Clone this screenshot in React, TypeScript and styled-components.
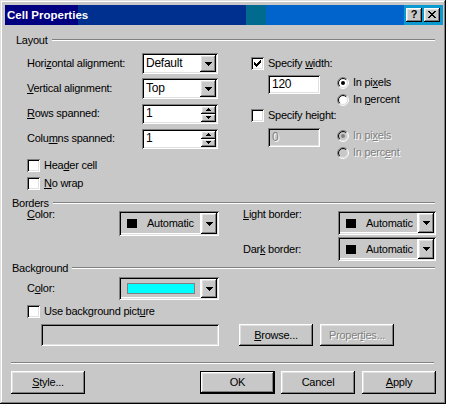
import React from 'react';
import styled, { createGlobalStyle, css } from 'styled-components';

const FACE = '#c8c8c8';

const GlobalStyle = createGlobalStyle`
  html, body { margin: 0; padding: 0; background: #ffffff; }
  body {
    font-family: "Liberation Sans", Arial, sans-serif;
    font-size: 11px;
    line-height: 13px;
    letter-spacing: -0.25px;
    color: #000;
  }
  u { text-decoration: underline; text-underline-offset: 1px; }
`;

const raised = css`
  box-shadow: inset -1px -1px #000, inset 1px 1px #fff, inset -2px -2px #808080, inset 2px 2px #e0e0e0;
`;
const sunken = css`
  box-shadow: inset 1px 1px #808080, inset -1px -1px #fff, inset 2px 2px #000, inset -2px -2px #e0e0e0;
`;

const Window = styled.div`
  width: 446px;
  height: 404px;
  box-sizing: border-box;
  background: ${FACE};
  box-shadow: inset -1px -1px #000, inset 1px 1px #e0e0e0, inset -2px -2px #808080, inset 2px 2px #fff;
  padding: 5px 3px 3px 5px;
  display: flex;
  flex-direction: column;
`;

const TitleBar = styled.div`
  height: 20px;
  flex-shrink: 0;
  display: flex;
  align-items: center;
  padding: 0 3px 0 2px;
  background: linear-gradient(90deg, #000080 0 16.7%, #00308f 16.7% 55%, #006a8f 55% 59.6%, #0064cc 59.6% 91%, #0a9ad0 91% 100%);
`;

const TitleText = styled.span`
  color: #fff;
  font-weight: bold;
  font-size: 11.5px;
  letter-spacing: 0;
`;

const TitleButtons = styled.div`
  margin-left: auto;
  display: flex;
  gap: 2px;
`;

const TitleButton = styled.div`
  width: 16px;
  height: 14px;
  box-sizing: border-box;
  background: ${FACE};
  ${raised};
  display: flex;
  align-items: center;
  justify-content: center;
  font-weight: bold;
  font-size: 11px;
  line-height: 11px;
  padding-bottom: 1px;
`;

const GroupHeading = styled.div<{ $indent: number; $top: number }>`
  display: flex;
  align-items: center;
  height: 12px;
  margin-top: ${p => p.$top}px;
  padding-left: ${p => p.$indent}px;
  padding-right: 8px;
  gap: 4px;
`;

const Etch = styled.div`
  flex: 1;
  height: 0;
  border-top: 1px solid #808080;
  border-bottom: 1px solid #fff;
`;

const Label = styled.span<{ $disabled?: boolean }>`
  white-space: nowrap;
  ${p => p.$disabled && css`
    color: #808080;
    text-shadow: 1px 1px 0 #fff;
  `}
`;

const LayoutBody = styled.div`
  display: flex;
  align-items: flex-start;
  padding-left: 22px;
  gap: 33px;
`;

const LeftCol = styled.div`
  display: flex;
  flex-direction: column;
  padding-top: 7px;
`;

const FieldGrid = styled.div`
  display: grid;
  grid-template-columns: 115px 76px;
  grid-auto-rows: 21px;
  row-gap: 4px;
  align-items: center;
`;

const CheckList = styled.div`
  display: flex;
  flex-direction: column;
  gap: 5px;
  margin-top: 10px;
`;

const CheckRow = styled.div<{ $top?: number; $indent?: number }>`
  display: flex;
  align-items: center;
  gap: 4px;
  height: 13px;
  margin-top: ${p => p.$top ?? 0}px;
  padding-left: ${p => p.$indent ?? 0}px;
`;

const RightCol = styled.div`
  display: flex;
  flex-direction: column;
  padding-top: 11px;
`;

const SizeRow = styled.div<{ $top: number }>`
  display: flex;
  align-items: flex-start;
  margin-left: 17px;
  margin-top: ${p => p.$top}px;
`;

const RadioList = styled.div`
  display: flex;
  flex-direction: column;
  margin-left: 17px;
  margin-top: -1px;
`;

const RadioRow = styled.div`
  display: flex;
  align-items: center;
  gap: 4px;
  height: 17px;
`;

const Field = styled.div<{ $w: number; $h: number; $disabled?: boolean }>`
  width: ${p => p.$w}px;
  height: ${p => p.$h}px;
  box-sizing: border-box;
  background: ${p => (p.$disabled ? FACE : '#fff')};
  ${sunken};
  padding: 2px;
  display: flex;
  align-items: stretch;
  flex-shrink: 0;
`;

const FieldText = styled.div<{ $disabled?: boolean }>`
  flex: 1;
  display: flex;
  align-items: center;
  padding-left: 2px;
  font-size: 12px;
  ${p => p.$disabled && css`
    color: #808080;
    text-shadow: 1px 1px 0 #fff;
  `}
`;

const ArrowButton = styled.div`
  width: 16px;
  flex-shrink: 0;
  box-sizing: border-box;
  background: ${FACE};
  ${raised};
  display: flex;
  align-items: center;
  justify-content: center;
`;

const SpinColumn = styled.div`
  width: 15px;
  display: flex;
  flex-direction: column;
`;

const SpinButton = styled.div`
  flex: 1;
  box-sizing: border-box;
  background: ${FACE};
  ${raised};
  display: flex;
  align-items: center;
  justify-content: center;
`;

const CheckBoxBox = styled.span`
  width: 13px;
  height: 13px;
  box-sizing: border-box;
  background: #fff;
  ${sunken};
  display: inline-flex;
  align-items: center;
  justify-content: center;
  flex-shrink: 0;
`;

const BordersBody = styled.div`
  display: flex;
  align-items: flex-start;
  padding-left: 22px;
  margin-top: 2px;
`;

const PairRow = styled.div`
  display: flex;
  align-items: flex-start;
`;

const FixedLabel = styled.div<{ $w: number; $shift?: number; $center?: boolean }>`
  width: ${p => p.$w}px;
  flex-shrink: 0;
  white-space: nowrap;
  margin-top: ${p => p.$shift ?? 0}px;
  align-self: ${p => (p.$center ? 'center' : 'flex-start')};
`;

const RightGrid = styled.div`
  display: grid;
  grid-template-columns: 95px 98px;
  grid-auto-rows: 24px;
  row-gap: 2px;
  margin-left: 24px;
`;

const ColorDrop = styled.div<{ $w: number; $h: number }>`
  width: ${p => p.$w}px;
  height: ${p => p.$h}px;
  box-sizing: border-box;
  background: ${FACE};
  ${sunken};
  padding: 2px;
  display: flex;
  align-items: stretch;
`;

const ColorMain = styled.div`
  flex: 1;
  display: flex;
  align-items: center;
  padding-left: 6px;
  gap: 10px;
  box-shadow: inset -1px -1px #fff;
`;

const Swatch = styled.span<{ $color: string; $w: number; $h: number; $frame?: boolean }>`
  width: ${p => p.$w}px;
  height: ${p => p.$h}px;
  box-sizing: border-box;
  background: ${p => p.$color};
  border: ${p => (p.$frame ? '1px solid #808080' : 'none')};
  flex-shrink: 0;
`;

const BgColorRow = styled.div`
  display: flex;
  align-items: center;
  padding-left: 22px;
  margin-top: 3px;
`;

const PictureRow = styled.div`
  display: flex;
  align-items: flex-start;
  padding-left: 36px;
  margin-top: 6px;
`;

const PlainField = styled.div<{ $w: number; $h: number }>`
  width: ${p => p.$w}px;
  height: ${p => p.$h}px;
  box-sizing: border-box;
  background: ${FACE};
  ${sunken};
`;

const Button = styled.div<{ $w: number; $h: number; $gap?: number; $default?: boolean; $disabled?: boolean }>`
  width: ${p => p.$w}px;
  height: ${p => p.$h}px;
  margin-left: ${p => p.$gap ?? 0}px;
  box-sizing: border-box;
  background: ${FACE};
  display: flex;
  align-items: center;
  justify-content: center;
  white-space: nowrap;
  flex-shrink: 0;
  ${p => p.$default
    ? css`
        border: 1px solid #000;
        box-shadow: inset -1px -1px #000, inset 1px 1px #fff, inset -2px -2px #808080, inset 2px 2px #e0e0e0;
      `
    : raised}
  ${p => p.$disabled && css`
    color: #808080;
    text-shadow: 1px 1px 0 #fff;
  `}
`;

const Separator = styled.div`
  margin: 16px 9px 0 6px;
  border-top: 1px solid #808080;
  border-bottom: 1px solid #fff;
`;

const ButtonRow = styled.div`
  display: flex;
  align-items: center;
  margin-top: 7px;
  padding-left: 6px;
  padding-right: 7px;
`;

const Spacer = styled.div`
  flex: 1;
`;

/* ---------- drawings ---------- */

const DownArrow = () => (
  <svg width="7" height="4" viewBox="0 0 7 4" shapeRendering="crispEdges">
    <path d="M0 0h7v1h-7z M1 1h5v1h-5z M2 2h3v1h-3z M3 3h1v1h-1z" fill="#000" />
  </svg>
);

const SpinArrow = ({ up }: { up?: boolean }) => (
  <svg width="5" height="3" viewBox="0 0 5 3" shapeRendering="crispEdges">
    {up ? (
      <path d="M2 0h1v1h-1z M1 1h3v1h-3z M0 2h5v1h-5z" fill="#000" />
    ) : (
      <path d="M0 0h5v1h-5z M1 1h3v1h-3z M2 2h1v1h-1z" fill="#000" />
    )}
  </svg>
);

const TickMark = () => (
  <svg width="7" height="7" viewBox="0 0 7 7" shapeRendering="crispEdges">
    <path
      d="M6 0h1v1h-1z M5 1h2v1h-2z M0 2h1v1h-1z M4 2h3v1h-3z M0 3h2v1h-2z M3 3h3v1h-3z M0 4h5v1h-5z M1 5h3v1h-3z M2 6h1v1h-1z"
      fill="#000"
    />
  </svg>
);

const CloseGlyph = () => (
  <svg width="8" height="7" viewBox="0 0 8 7" shapeRendering="crispEdges">
    <path
      d="M0 0h2v1h-2z M6 0h2v1h-2z M1 1h2v1h-2z M5 1h2v1h-2z M2 2h4v1h-4z M3 3h2v1h-2z M2 4h4v1h-4z M1 5h2v1h-2z M5 5h2v1h-2z M0 6h2v1h-2z M6 6h2v1h-2z"
      fill="#000"
    />
  </svg>
);

const Radio = ({ checked, disabled }: { checked?: boolean; disabled?: boolean }) => {
  const arc = (r: number) => {
    const d = r * 0.7071;
    return {
      tl: `M${6 - d} ${6 + d} A${r} ${r} 0 0 1 ${6 + d} ${6 - d}`,
      br: `M${6 + d} ${6 - d} A${r} ${r} 0 0 1 ${6 - d} ${6 + d}`,
    };
  };
  const o = arc(5.5);
  const i = arc(4.5);
  return (
    <svg width="12" height="12" viewBox="0 0 12 12" style={{ flexShrink: 0 }}>
      <circle cx="6" cy="6" r="4.5" fill={disabled ? FACE : '#fff'} />
      <path d={o.tl} stroke="#808080" fill="none" />
      <path d={o.br} stroke="#fff" fill="none" />
      <path d={i.tl} stroke="#000" fill="none" />
      <path d={i.br} stroke="#e0e0e0" fill="none" />
      {checked && <circle cx="6" cy="6" r="2" fill={disabled ? '#808080' : '#000'} />}
    </svg>
  );
};

/* ---------- controls ---------- */

const Checkbox = ({ checked }: { checked?: boolean }) => (
  <CheckBoxBox>{checked && <TickMark />}</CheckBoxBox>
);

const Combo = ({ value }: { value: string }) => (
  <Field $w={76} $h={21}>
    <FieldText>{value}</FieldText>
    <ArrowButton>
      <DownArrow />
    </ArrowButton>
  </Field>
);

const Spinner = ({ value }: { value: string }) => (
  <Field $w={76} $h={20}>
    <FieldText>{value}</FieldText>
    <SpinColumn>
      <SpinButton>
        <SpinArrow up />
      </SpinButton>
      <SpinButton>
        <SpinArrow />
      </SpinButton>
    </SpinColumn>
  </Field>
);

const ColorPicker = ({ w, h, children }: { w: number; h: number; children: React.ReactNode }) => (
  <ColorDrop $w={w} $h={h}>
    <ColorMain>{children}</ColorMain>
    <ArrowButton>
      <DownArrow />
    </ArrowButton>
  </ColorDrop>
);

const AutoColor = ({ w, h }: { w: number; h: number }) => (
  <ColorPicker w={w} h={h}>
    <Swatch $color="#000" $w={10} $h={9} />
    <span>Automatic</span>
  </ColorPicker>
);

export default function App() {
  return (
    <>
      <GlobalStyle />
      <Window>
        <TitleBar>
          <TitleText>Cell Properties</TitleText>
          <TitleButtons>
            <TitleButton>?</TitleButton>
            <TitleButton>
              <CloseGlyph />
            </TitleButton>
          </TitleButtons>
        </TitleBar>

        <GroupHeading $indent={11} $top={9}>
          <Label>Layout</Label>
          <Etch />
        </GroupHeading>

        <LayoutBody>
          <LeftCol>
            <FieldGrid>
              <Label>Hori<u>z</u>ontal alignment:</Label>
              <Combo value="Default" />
              <Label><u>V</u>ertical alignment:</Label>
              <Combo value="Top" />
              <Label><u>R</u>ows spanned:</Label>
              <Spinner value="1" />
              <Label>Colu<u>m</u>ns spanned:</Label>
              <Spinner value="1" />
            </FieldGrid>
            <CheckList>
              <CheckRow>
                <Checkbox />
                <Label>Hea<u>d</u>er cell</Label>
              </CheckRow>
              <CheckRow>
                <Checkbox />
                <Label><u>N</u>o wrap</Label>
              </CheckRow>
            </CheckList>
          </LeftCol>

          <RightCol>
            <CheckRow>
              <Checkbox checked />
              <Label>Specify <u>w</u>idth:</Label>
            </CheckRow>
            <SizeRow $top={5}>
              <Field $w={52} $h={19}>
                <FieldText>120</FieldText>
              </Field>
              <RadioList>
                <RadioRow>
                  <Radio checked />
                  <Label>In pi<u>x</u>els</Label>
                </RadioRow>
                <RadioRow>
                  <Radio />
                  <Label>In <u>p</u>ercent</Label>
                </RadioRow>
              </RadioList>
            </SizeRow>
            <CheckRow $top={1}>
              <Checkbox />
              <Label>Specify hei<u>g</u>ht:</Label>
            </CheckRow>
            <SizeRow $top={6}>
              <Field $w={52} $h={19} $disabled>
                <FieldText $disabled>0</FieldText>
              </Field>
              <RadioList>
                <RadioRow>
                  <Radio checked disabled />
                  <Label $disabled>In pi<u>x</u>els</Label>
                </RadioRow>
                <RadioRow>
                  <Radio disabled />
                  <Label $disabled>In perc<u>e</u>nt</Label>
                </RadioRow>
              </RadioList>
            </SizeRow>
          </RightCol>
        </LayoutBody>

        <GroupHeading $indent={7} $top={7}>
          <Label>Borders</Label>
          <Etch />
        </GroupHeading>

        <BordersBody>
          <PairRow>
            <FixedLabel $w={92} $shift={-3}>
              <u>C</u>olor:
            </FixedLabel>
            <AutoColor w={100} h={25} />
          </PairRow>
          <RightGrid>
            <FixedLabel $w={95} $shift={-3}>
              <u>L</u>ight border:
            </FixedLabel>
            <AutoColor w={98} h={24} />
            <FixedLabel $w={95} $center>
              Dar<u>k</u> border:
            </FixedLabel>
            <AutoColor w={98} h={24} />
          </RightGrid>
        </BordersBody>

        <GroupHeading $indent={7} $top={1}>
          <Label>Background</Label>
          <Etch />
        </GroupHeading>

        <BgColorRow>
          <FixedLabel $w={92} $center>
            C<u>o</u>lor:
          </FixedLabel>
          <ColorPicker w={100} h={23}>
            <Swatch $color="#00ffff" $w={68} $h={11} $frame />
          </ColorPicker>
        </BgColorRow>

        <CheckRow $top={5} $indent={22}>
          <Checkbox />
          <Label>Use background pict<u>u</u>re</Label>
        </CheckRow>

        <PictureRow>
          <PlainField $w={178} $h={22} />
          <Button $w={74} $h={22} $gap={20}>
            <span><u>B</u>rowse...</span>
          </Button>
          <Button $w={74} $h={22} $gap={7} $disabled>
            <span>Proper<u>t</u>ies...</span>
          </Button>
        </PictureRow>

        <Separator />

        <ButtonRow>
          <Button $w={74} $h={23}>
            <span><u>S</u>tyle...</span>
          </Button>
          <Spacer />
          <Button $w={75} $h={23} $default>
            OK
          </Button>
          <Button $w={74} $h={23} $gap={6}>
            Cancel
          </Button>
          <Button $w={74} $h={23} $gap={7}>
            <span><u>A</u>pply</span>
          </Button>
        </ButtonRow>
      </Window>
    </>
  );
}
